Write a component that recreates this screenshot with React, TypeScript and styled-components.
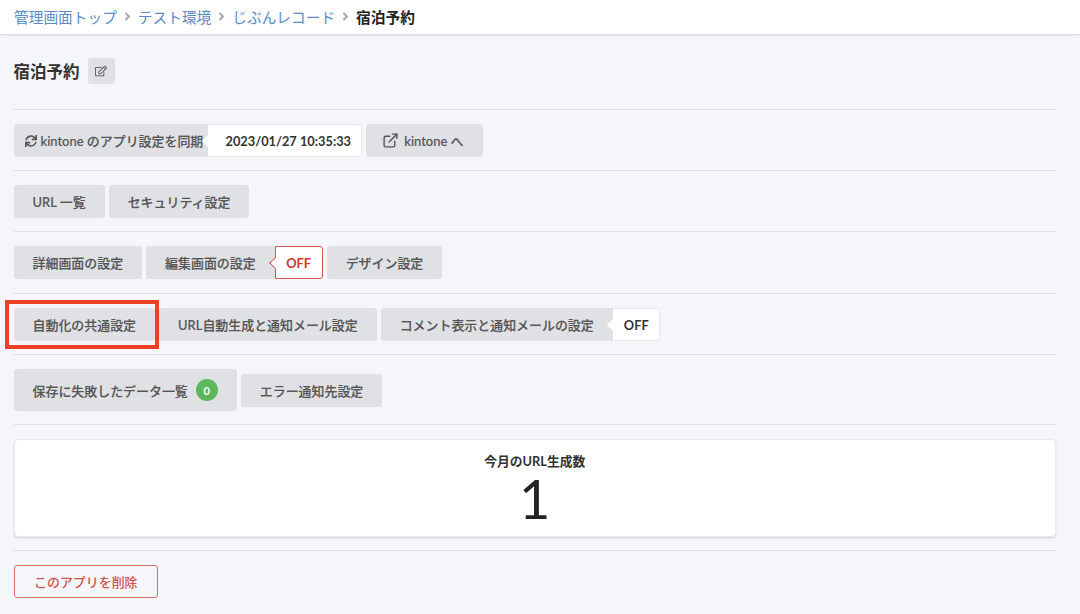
import styled, { createGlobalStyle } from 'styled-components'
import { FaAngleRight, FaRegEdit, FaSync } from 'react-icons/fa'
import { FiExternalLink } from 'react-icons/fi'

const GlobalStyle = createGlobalStyle`
  html, body {
    margin: 0;
    padding: 0;
    background-color: #f5f6fa;
  }
  body {
    font-family: Lato, "Noto Sans CJK JP", "Noto Sans", sans-serif;
    color: #333;
  }
  * {
    box-sizing: border-box;
  }
`

const Page = styled.div`
  width: 1080px;
  height: 614px;
  overflow: hidden;
  background-color: #f5f6fa;
`

const Breadcrumb = styled.nav`
  display: flex;
  align-items: center;
  height: 35px;
  padding: 0 14px 1px;
  background-color: #fff;
  border-bottom: 1px solid #dfe0e3;
  box-shadow: 0 1px 2px rgba(0, 0, 0, 0.08);
  font-size: 14.7px;
`

const Crumb = styled.a`
  color: #5b8ac4;
  text-decoration: none;
`

const CrumbCurrent = styled.span`
  color: #222;
  font-weight: 700;
`

const CrumbSep = styled.span`
  display: inline-flex;
  justify-content: center;
  width: 21px;
  color: #a8a8a8;
  font-size: 13px;
`

const Main = styled.main`
  padding: 0 24px 0 13.5px;
`

const TitleRow = styled.div`
  display: flex;
  align-items: center;
  gap: 8px;
  height: 75px;
  padding-bottom: 2px;
  border-bottom: 1px solid #dfe0e4;
`

const Title = styled.h1`
  margin: 0;
  font-size: 16.5px;
  font-weight: 700;
  color: #333;
`

const EditButton = styled.button`
  display: flex;
  align-items: center;
  justify-content: center;
  width: 27px;
  height: 26px;
  padding: 0;
  border: 0;
  border-radius: 3px;
  background-color: #e0e1e4;
  color: #666;
  font-size: 12px;
`

const Row = styled.div<{ $bottom?: number; $last?: boolean }>`
  position: relative;
  display: flex;
  align-items: center;
  gap: 4px;
  padding: 14px 0 ${p => p.$bottom ?? 13}px;
  border-bottom: ${p => (p.$last ? '0' : '1px solid #dfe0e4')};
`

const Button = styled.button<{ $tall?: boolean }>`
  display: inline-flex;
  align-items: center;
  gap: 5px;
  height: ${p => (p.$tall ? 42 : 33)}px;
  padding: 0 19px;
  border: 0;
  border-radius: 3px;
  background-color: #e0e1e4;
  color: #555;
  font-family: inherit;
  font-size: 12.95px;
  font-weight: 500;
  -webkit-text-stroke: 0.15px #555;
  white-space: nowrap;
`

const LinkButton = styled(Button)`
  padding-left: 16px;
`

const TagGroup = styled.div`
  display: inline-flex;
  height: 33px;
`

const GroupLabel = styled(Button)`
  border-radius: 3px 0 0 3px;
`

const SyncLabel = styled(GroupLabel)`
  gap: 4px;
  padding: 0 5px 0 11px;
`

const Tag = styled.span<{ $danger?: boolean; $width: number; $inset?: number }>`
  position: relative;
  display: inline-flex;
  align-items: center;
  justify-content: center;
  width: ${p => p.$width}px;
  padding-left: ${p => p.$inset ?? 0}px;
  background-color: #fff;
  border: 1px solid ${p => (p.$danger ? '#d9534f' : '#e6e7ea')};
  border-left-color: ${p => (p.$danger ? '#d9534f' : '#fff')};
  border-radius: 0 3px 3px 0;
  color: ${p => (p.$danger ? '#d0342c' : '#333')};
  font-size: 12.8px;
  font-weight: 700;

  &::before {
    content: '';
    position: absolute;
    left: -5px;
    top: 50%;
    width: 8px;
    height: 8px;
    background-color: #fff;
    border-left: 1px solid ${p => (p.$danger ? '#d9534f' : '#fff')};
    border-bottom: 1px solid ${p => (p.$danger ? '#d9534f' : '#fff')};
    transform: translateY(-50%) rotate(45deg);
  }
`

const Badge = styled.span`
  display: inline-flex;
  align-items: center;
  justify-content: center;
  width: 22px;
  height: 22px;
  margin-left: 3px;
  border-radius: 50%;
  background-color: #5cb85c;
  color: #fff;
  font-size: 11px;
  font-weight: 700;
  -webkit-text-stroke: 0;
`

const Highlight = styled.div`
  position: absolute;
  left: -9px;
  top: 6px;
  width: 154px;
  height: 49px;
  border: 4px solid #ee4023;
  pointer-events: none;
`

const Card = styled.section`
  display: flex;
  flex-direction: column;
  align-items: center;
  height: 98px;
  padding-top: 12px;
  background-color: #fff;
  border: 1px solid #e8e9ec;
  border-radius: 4px;
  box-shadow: 0 1px 2px rgba(0, 0, 0, 0.15);
`

const CardLabel = styled.div`
  font-size: 12.8px;
  font-weight: 700;
  line-height: 18px;
  color: #333;
`

const CardValue = styled.div`
  margin-top: 2px;
  font-size: 54px;
  line-height: 54px;
  color: #222;
`

const CardWrap = styled.div`
  padding: 14px 0 13px;
  border-bottom: 1px solid #dfe0e4;
`

const DeleteButton = styled.button`
  height: 33px;
  padding: 0 19.5px;
  background: transparent;
  border: 1px solid #d9706c;
  border-radius: 3px;
  color: #cf5450;
  font-family: inherit;
  font-size: 12.95px;
  font-weight: 500;
`

const App = () => {
  return (
    <Page>
      <GlobalStyle />
      <Breadcrumb>
        <Crumb href="#">管理画面トップ</Crumb>
        <CrumbSep><FaAngleRight /></CrumbSep>
        <Crumb href="#">テスト環境</Crumb>
        <CrumbSep><FaAngleRight /></CrumbSep>
        <Crumb href="#">じぶんレコード</Crumb>
        <CrumbSep><FaAngleRight /></CrumbSep>
        <CrumbCurrent>宿泊予約</CrumbCurrent>
      </Breadcrumb>
      <Main>
        <TitleRow>
          <Title>宿泊予約</Title>
          <EditButton aria-label="edit"><FaRegEdit /></EditButton>
        </TitleRow>
        <Row>
          <TagGroup>
            <SyncLabel><FaSync size={12} /> kintone のアプリ設定を同期</SyncLabel>
            <Tag $width={154} $inset={6}>2023/01/27 10:35:33</Tag>
          </TagGroup>
          <LinkButton><FiExternalLink size={17} /> kintone へ</LinkButton>
        </Row>
        <Row>
          <Button>URL 一覧</Button>
          <Button>セキュリティ設定</Button>
        </Row>
        <Row $bottom={14}>
          <Button>詳細画面の設定</Button>
          <TagGroup>
            <GroupLabel>編集画面の設定</GroupLabel>
            <Tag $danger $width={48}>OFF</Tag>
          </TagGroup>
          <Button>デザイン設定</Button>
        </Row>
        <Row>
          <Button>自動化の共通設定</Button>
          <Button>URL自動生成と通知メール設定</Button>
          <TagGroup>
            <GroupLabel>コメント表示と通知メールの設定</GroupLabel>
            <Tag $width={47}>OFF</Tag>
          </TagGroup>
          <Highlight />
        </Row>
        <Row>
          <Button $tall>保存に失敗したデータ一覧<Badge>0</Badge></Button>
          <Button>エラー通知先設定</Button>
        </Row>
        <CardWrap>
          <Card>
            <CardLabel>今月のURL生成数</CardLabel>
            <CardValue>1</CardValue>
          </Card>
        </CardWrap>
        <Row $last $bottom={0}>
          <DeleteButton>このアプリを削除</DeleteButton>
        </Row>
      </Main>
    </Page>
  )
}

export default App
